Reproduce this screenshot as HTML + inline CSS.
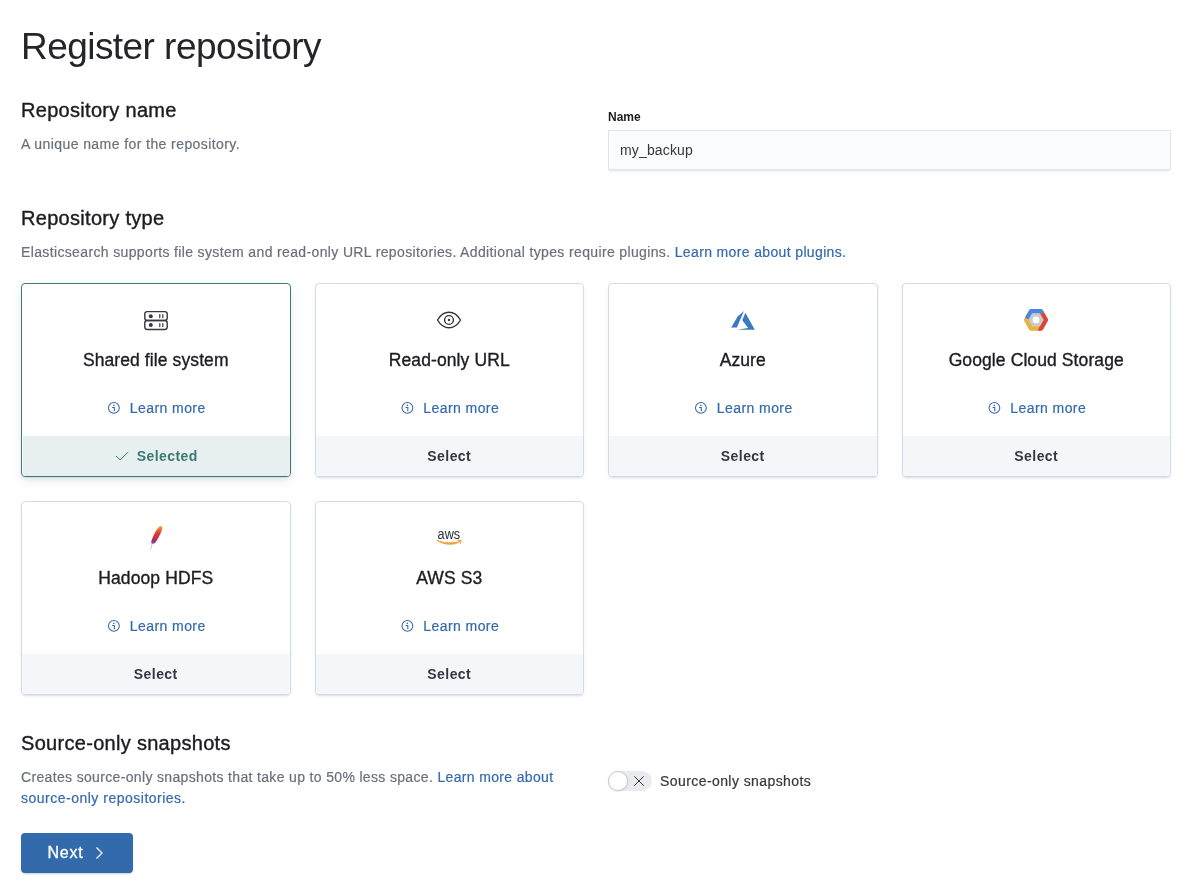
<!DOCTYPE html>
<html><head><meta charset="utf-8">
<style>
*{box-sizing:border-box;margin:0;padding:0}
html,body{width:1192px;height:895px;background:#fff;overflow:hidden}
#wrap{position:absolute;left:0;top:0;width:1192px;height:895px;will-change:transform}
body{font-family:"Liberation Sans",sans-serif;color:#343741;position:relative}
.abs{position:absolute;white-space:nowrap}
.t1{font-size:37px;color:#24252a;line-height:40px;letter-spacing:-.55px}
.h2{font-size:20px;color:#1c1d21;line-height:24px;letter-spacing:.3px;-webkit-text-stroke:.4px #1c1d21}
.desc{font-size:14px;color:#6a707b;line-height:21px;letter-spacing:.42px;-webkit-text-stroke-width:.2px}
.link{color:#336aac}
.label{font-size:12px;font-weight:bold;color:#1c1d21;line-height:16px}
.input{position:absolute;left:608px;top:130px;width:563px;height:40px;background:#fbfcfd;
 box-shadow:inset 0 0 0 1px #e3e4e8, 0 1px 1px -1px rgba(152,162,179,.3), 0 3px 2px -2px rgba(152,162,179,.3);
 font-size:14px;color:#343741;padding-left:12px;line-height:40px;letter-spacing:.15px}
.card{position:absolute;width:269.5px;height:194px;border:1px solid #d5dae6;border-radius:4px;background:#fff;
 box-shadow:0 2px 2px -1px rgba(152,162,179,.3),0 1px 5px -2px rgba(152,162,179,.3);overflow:hidden;text-align:center}
.card.sel{border-color:#3d7b74;box-shadow:0 2px 2px -1px rgba(152,162,179,.3),0 4px 12px -2px rgba(152,162,179,.35)}
.card .ttl{position:absolute;left:0;right:0;top:64px;font-size:17.5px;line-height:24px;color:#1c1d21;letter-spacing:.1px;-webkit-text-stroke:.35px #1c1d21}
.card .lm{position:absolute;left:0;right:0;top:114px;font-size:14px;line-height:21px;color:#336aac;letter-spacing:.42px;-webkit-text-stroke-width:.2px}
.card .lm i{display:inline-block;width:12px;height:12px;margin-right:12px;vertical-align:-1px}
.card .ft{position:absolute;left:0;right:0;bottom:0;height:40px;background:#f5f6f9;font-size:14px;font-weight:bold;line-height:40px;color:#343741;letter-spacing:.45px}
.card.sel .ft{background:#e7eff0;color:#3a7a70;left:1px;right:0}
.btn{position:absolute;left:21px;top:833px;width:112px;height:40px;background:#336aac;border-radius:4px;color:#fff;font-size:16px;line-height:40px;
 box-shadow:0 2px 2px -1px rgba(54,97,126,.3)}
svg.ov{position:absolute;left:0;top:0}
</style></head>
<body>
<div id="wrap">
<div class="abs t1" style="left:21px;top:26.5px">Register repository</div>

<div class="abs h2" style="left:21px;top:98px">Repository name</div>
<div class="abs desc" style="left:21px;top:134px">A unique name for the repository.</div>
<div class="abs label" style="left:608px;top:109px">Name</div>
<div class="input">my_backup</div>

<div class="abs h2" style="left:21px;top:206px">Repository type</div>
<div class="abs desc" style="left:21px;top:242px;letter-spacing:.36px">Elasticsearch supports file system and read-only URL repositories. Additional types require plugins. <span class="link">Learn more about plugins.</span></div>

<div class="card sel" style="left:21px;top:283px">
  <div class="ttl">Shared file system</div>
  <div class="lm"><i></i>Learn more</div>
  <div class="ft"><i style="display:inline-block;width:22px"></i>Selected</div>
</div>
<div class="card" style="left:314.5px;top:283px">
  <div class="ttl">Read-only URL</div>
  <div class="lm"><i></i>Learn more</div>
  <div class="ft">Select</div>
</div>
<div class="card" style="left:608px;top:283px">
  <div class="ttl">Azure</div>
  <div class="lm"><i></i>Learn more</div>
  <div class="ft">Select</div>
</div>
<div class="card" style="left:901.5px;top:283px">
  <div class="ttl">Google Cloud Storage</div>
  <div class="lm"><i></i>Learn more</div>
  <div class="ft">Select</div>
</div>
<div class="card" style="left:21px;top:501px">
  <div class="ttl">Hadoop HDFS</div>
  <div class="lm"><i></i>Learn more</div>
  <div class="ft">Select</div>
</div>
<div class="card" style="left:314.5px;top:501px">
  <div class="ttl">AWS S3</div>
  <div class="lm"><i></i>Learn more</div>
  <div class="ft">Select</div>
</div>

<div class="abs h2" style="left:21px;top:731px">Source-only snapshots</div>
<div class="abs desc" style="left:21px;top:767px;letter-spacing:.34px">Creates source-only snapshots that take up to 50% less space. <span class="link">Learn more about</span></div>
<div class="abs desc link" style="left:21px;top:788px;letter-spacing:.5px">source-only repositories.</div>

<div class="abs" style="left:608px;top:771px;width:44px;height:20px;border-radius:10px;background:#e9ebef"></div>
<div class="abs" style="left:608px;top:771px;width:20px;height:20px;border-radius:10px;background:#fff;border:1px solid #c6c9ce;box-shadow:0 1px 2px rgba(152,162,179,.25)"></div>
<div class="abs desc" style="left:660px;top:771px;color:#343741">Source-only snapshots</div>

<div class="btn"><span style="position:absolute;left:26.5px;letter-spacing:.75px;-webkit-text-stroke:.3px #fff">Next</span></div>

<svg class="ov" width="1192" height="895" viewBox="0 0 1192 895">
  <!-- storage icon -->
  <g fill="none" stroke="#343741" stroke-width="1.4">
    <rect x="144.8" y="311.6" width="22.4" height="8.9" rx="2.4"/>
    <rect x="144.8" y="320.5" width="22.4" height="9" rx="2.4"/>
    <path d="M159.8 314.6v3.1M162.8 314.6v3.1M159.8 323.5v3.1M162.8 323.5v3.1" stroke-width="1.2" stroke-linecap="round"/>
  </g>
  <g fill="#343741"><circle cx="150.8" cy="316.3" r="2"/><circle cx="150.8" cy="325.1" r="2"/></g>
  <!-- eye icon -->
  <g fill="none" stroke="#343741" stroke-width="1.4">
    <path d="M437.5 320 C440.8 314.2 444.8 312.2 449 312.2 C453.2 312.2 457.2 314.2 460.5 320 C457.2 325.8 453.2 327.8 449 327.8 C444.8 327.8 440.8 325.8 437.5 320Z"/>
    <circle cx="449" cy="320" r="4.4"/>
  </g>
  <circle cx="449" cy="320" r="1.2" fill="#343741"/>
  <!-- azure -->
  <g fill="#3b79c3">
    <path d="M731.2 327.6 L736.9 327.6 L743.9 311 L737.6 316.5 Z"/>
    <path d="M745.3 312.8 L754.8 329.7 L737.2 329.7 L748.1 327.9 L742.3 320.2 Z"/>
  </g>
  <!-- google cloud -->
  <defs><clipPath id="hexc"><path d="M-11.61 1.39 Q-12.40 0.00 -11.61 -1.39 L-6.99 -9.51 Q-6.20 -10.90 -4.60 -10.90 L4.60 -10.90 Q6.20 -10.90 6.99 -9.51 L11.61 -1.39 Q12.40 0.00 11.61 1.39 L6.99 9.51 Q6.20 10.90 4.60 10.90 L-4.60 10.90 Q-6.20 10.90 -6.99 9.51Z"/></clipPath></defs>
  <g transform="translate(1036 319.9)">
    <g clip-path="url(#hexc)">
      <rect x="-14" y="-13" width="28" height="26" fill="#e9b43a"/>
      <path d="M-14 -3.6 L-7.2 -0.4 L-3.6 -6.3 L4 -6.3 L14 -6.6 L14 -13 L-14 -13 Z" fill="#4a86e8"/>
      <path d="M4 -6.3 L8.4 -6.8 L14 -6.6 L14 13 L1.2 13 L3.4 6.3 L7.3 0 Z" fill="#d8483a"/>
    </g>
    <path d="M-7.3 0 L-3.65 -6.3 L3.65 -6.3 L7.3 0 L3.65 6.3 L-3.65 6.3 Z" fill="#cbcbcb" stroke="#cbcbcb" stroke-width=".6" stroke-linejoin="round"/>
    <circle cx="0" cy="0" r="3.4" fill="#fff"/>
  </g>
  <!-- hadoop feather -->
  <defs>
    <linearGradient id="fg" x1="0" y1="0" x2="0" y2="1">
      <stop offset="0" stop-color="#f4a535"/>
      <stop offset=".4" stop-color="#dc3a3a"/>
      <stop offset=".75" stop-color="#c02a4a"/>
      <stop offset=".9" stop-color="#8a3090"/>
      <stop offset="1" stop-color="#9a78c0"/>
    </linearGradient>
  </defs>
  <path d="M161.2 526.1 C162.6 526.6 162.5 529 161.3 531.8 C160 535 157.8 539 155.6 542.3 C154.6 543.7 153 544.3 151.6 543.6 C150.9 543 151.3 541 152.2 538.8 C153.6 535 155.6 531 157.8 528.2 C159 526.6 160.3 525.8 161.2 526.1Z" fill="url(#fg)"/>
  <path d="M152.2 544 L150.5 549.6" stroke="#a58cc4" stroke-width="1" fill="none" opacity=".55"/>
  <!-- aws -->
  <text x="437.6" y="538.9" font-family="Liberation Sans" font-size="14" fill="#252f3e" textLength="22.6" lengthAdjust="spacingAndGlyphs" style="-webkit-text-stroke:.35px #252f3e">aws</text>
  <path d="M437 540.2 C442.5 544.6 454 546 459.8 541.6 C455 543.2 443 543.6 437 540.2Z" fill="#f0a03a" stroke="#f0a03a" stroke-width=".9" stroke-linejoin="round"/>
  <path d="M457.6 540.4 L461 540.2 L460.2 543.6" fill="none" stroke="#f0a03a" stroke-width="1.1" stroke-linejoin="round"/>
  <!-- info icons -->
  <defs><g id="ii" fill="none" stroke="#336aac">
    <circle cx="0" cy="0" r="5.4" stroke-width="1.05"/>
    <path d="M-1.8 -0.4 H0.4 V3.3" stroke-width="1.1"/>
    <rect x="-0.75" y="-3.2" width="1.4" height="1.3" fill="#336aac" stroke="none"/>
  </g></defs>
  <use href="#ii" x="113.9" y="407.9"/>
  <use href="#ii" x="407.4" y="407.9"/>
  <use href="#ii" x="700.9" y="407.9"/>
  <use href="#ii" x="994.4" y="407.9"/>
  <use href="#ii" x="113.9" y="625.9"/>
  <use href="#ii" x="407.4" y="625.9"/>
  <!-- check -->
  <path d="M116.2 456 L120.2 460 L128 452.2" fill="none" stroke="#3a7a70" stroke-width="1"/>
  <!-- chevron -->
  <path d="M96.5 847.5 L102 853 L96.5 858.5" fill="none" stroke="#fff" stroke-width="1.2"/>
  <!-- switch X -->
  <path d="M634.3 776.3 L643.7 785.7 M643.7 776.3 L634.3 785.7" stroke="#343741" stroke-width="1"/>
</svg>
</div>
</body></html>
